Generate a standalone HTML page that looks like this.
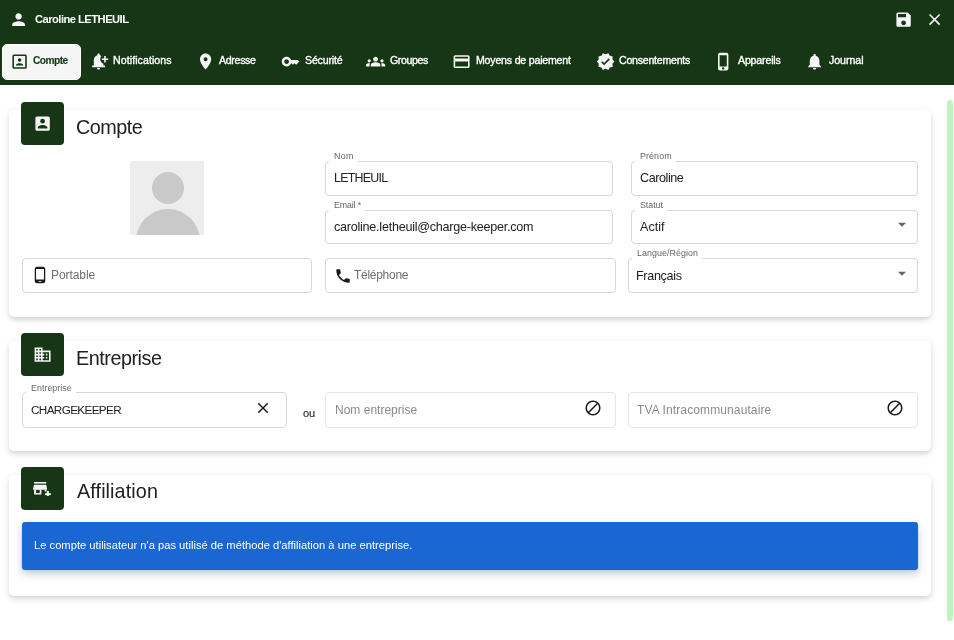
<!DOCTYPE html>
<html><head><meta charset="utf-8">
<style>
*{box-sizing:border-box;margin:0;padding:0}
html,body{width:954px;height:640px;overflow:hidden;background:#fff;font-family:"Liberation Sans",sans-serif;color:#212121}
.ico{position:absolute;display:block;overflow:visible}
.t{position:absolute;white-space:pre;line-height:1;will-change:transform}
.blk{position:absolute}
.card{position:absolute;left:9px;width:922px;background:#fff;border-radius:5px;box-shadow:0 3px 5px -1px rgba(0,0,0,.13),0 2px 9px 1px rgba(0,0,0,.07)}
.sq{position:absolute;left:21px;width:43px;height:43px;background:#163616;border-radius:4px}
.fld{position:absolute;border:1px solid #d6d6d6;border-radius:4px;background:#fff}
.fld.dis{border-color:#e6e6e6}
.gap{position:absolute;height:3px;background:#fff}
</style></head><body>
<div class="blk" style="left:0;top:0;width:954px;height:85px;background:#163616"></div>
<svg class="ico" style="left:8.80px;top:9.80px" width="19.2" height="19.2" viewBox="0 0 24 24"><path fill="#f7f7f7" d="M12 12c2.21 0 4-1.79 4-4s-1.79-4-4-4-4 1.79-4 4 1.79 4 4 4zm0 2c-2.67 0-8 1.34-8 4v2h16v-2c0-2.66-5.33-4-8-4z"/></svg>
<div class="t" style="left:34.8px;top:14px;font-size:11.2px;letter-spacing:-0.533px;font-weight:bold;color:#fff;">Caroline LETHEUIL</div>
<svg class="ico" style="left:893.50px;top:9.60px" width="19.2" height="19.2" viewBox="0 0 24 24"><path fill="#f7f7f7" d="M17 3H5c-1.11 0-2 .9-2 2v14c0 1.1.89 2 2 2h14c1.1 0 2-.9 2-2V7l-4-4zm-5 16c-1.66 0-3-1.34-3-3s1.34-3 3-3 3 1.34 3 3-1.34 3-3 3zm3-10H5V5h10v4z"/></svg>
<svg class="ico" style="left:925.00px;top:9.70px" width="19.2" height="19.2" viewBox="0 0 24 24"><path fill="#f7f7f7" d="M19 6.41L17.59 5 12 10.59 6.41 5 5 6.41 10.59 12 5 17.59 6.41 19 12 13.41 17.59 19 19 17.59 13.41 12z"/></svg>
<div class="blk" style="left:2px;top:44px;width:79px;height:36px;background:#f5f5f5;border:1px solid #fff;border-radius:5px"></div>
<svg class="ico" style="left:9.60px;top:51.70px" width="19.2" height="19.2" viewBox="0 0 24 24"><path fill="#163616" d="M19,19H5V5H19M19,3H5A2,2 0 0,0 3,5V19A2,2 0 0,0 5,21H19A2,2 0 0,0 21,19V5C21,3.89 20.1,3 19,3M16.5,16.25C16.5,14.75 13.5,14 12,14C10.5,14 7.5,14.75 7.5,16.25V17H16.5M12,12.25A2.25,2.25 0 0,0 14.25,10A2.25,2.25 0 0,0 12,7.75A2.25,2.25 0 0,0 9.75,10A2.25,2.25 0 0,0 12,12.25Z"/></svg>
<div class="t" style="left:33.2px;top:56px;font-size:10.2px;letter-spacing:-0.551px;font-weight:bold;color:#163616;-webkit-text-stroke:0.15px #163616">Compte</div>
<svg class="ico" style="left:89.40px;top:51.70px" width="19.2" height="19.2" viewBox="0 0 24 24"><path fill="#f7f7f7" d="M10 20h4c0 1.1-.9 2-2 2s-2-.9-2-2zm4-11c0 2.61 1.67 4.83 4 5.65V17h2v2H4v-2h2v-7c0-2.79 1.91-5.14 4.5-5.8v-.7c0-.83.67-1.5 1.5-1.5s1.5.67 1.5 1.5v.7c.71.18 1.36.49 1.94.9A6.005 6.005 0 0014 9zm10-1h-3V5h-2v3h-3v2h3v3h2v-3h3V8z"/></svg>
<div class="t" style="left:112.9px;top:55px;font-size:10.6px;letter-spacing:0.075px;color:#fff;-webkit-text-stroke:0.35px #fff">Notifications</div>
<svg class="ico" style="left:196.30px;top:51.70px" width="19.2" height="19.2" viewBox="0 0 24 24"><path fill="#f7f7f7" d="M12 2C8.13 2 5 5.13 5 9c0 5.25 7 13 7 13s7-7.75 7-13c0-3.87-3.13-7-7-7zm0 9.5c-1.38 0-2.5-1.12-2.5-2.5s1.12-2.5 2.5-2.5 2.5 1.12 2.5 2.5-1.12 2.5-2.5 2.5z"/></svg>
<div class="t" style="left:219.4px;top:55px;font-size:10.6px;letter-spacing:-0.312px;color:#fff;-webkit-text-stroke:0.35px #fff">Adresse</div>
<svg class="ico" style="left:281.00px;top:51.70px" width="19.2" height="19.2" viewBox="0 0 24 24"><path fill="#f7f7f7" d="M21 10h-8.35C11.83 7.67 9.61 6 7 6c-3.31 0-6 2.69-6 6s2.69 6 6 6c2.61 0 4.83-1.67 5.65-4H13l2 2 2-2 2 2 4-4.04L21 10zM7 15c-1.65 0-3-1.35-3-3s1.35-3 3-3 3 1.35 3 3-1.35 3-3 3z"/></svg>
<div class="t" style="left:304.6px;top:55px;font-size:10.6px;letter-spacing:-0.182px;color:#fff;-webkit-text-stroke:0.35px #fff">Sécurité</div>
<svg class="ico" style="left:366.40px;top:51.70px" width="19.2" height="19.2" viewBox="0 0 24 24"><path fill="#f7f7f7" d="M12 12.75c1.63 0 3.07.39 4.24.9 1.08.48 1.76 1.56 1.76 2.73V18H6v-1.61c0-1.18.68-2.26 1.760-2.73 1.17-.52 2.61-.91 4.24-.91zM4 13c1.1 0 2-.9 2-2s-.9-2-2-2-2 .9-2 2 .9 2 2 2zm1.13 1.1c-.37-.06-.74-.1-1.13-.1-.99 0-1.93.21-2.78.58C.48 14.9 0 15.62 0 16.43V18h4.5v-1.61c0-.83.23-1.61.63-2.29zM20 13c1.1 0 2-.9 2-2s-.9-2-2-2-2 .9-2 2 .9 2 2 2zm4 3.43c0-.81-.48-1.530-1.22-1.85-.85-.37-1.79-.58-2.78-.58-.39 0-.76.04-1.13.1.4.68.63 1.46.63 2.29V18H24v-1.57zM12 6c1.66 0 3 1.34 3 3s-1.34 3-3 3-3-1.34-3-3 1.34-3 3-3z"/></svg>
<div class="t" style="left:390.0px;top:55px;font-size:10.6px;letter-spacing:-0.406px;color:#fff;-webkit-text-stroke:0.35px #fff">Groupes</div>
<svg class="ico" style="left:452.00px;top:51.70px" width="19.2" height="19.2" viewBox="0 0 24 24"><path fill="#f7f7f7" d="M20 4H4c-1.11 0-1.99.89-1.99 2L2 18c0 1.11.89 2 2 2h16c1.11 0 2-.89 2-2V6c0-1.11-.89-2-2-2zm0 14H4v-6h16v6zm0-10H4V6h16v2z"/></svg>
<div class="t" style="left:476.0px;top:55px;font-size:10.6px;letter-spacing:-0.2px;color:#fff;-webkit-text-stroke:0.35px #fff">Moyens de paiement</div>
<svg class="ico" style="left:595.50px;top:51.70px" width="19.2" height="19.2" viewBox="0 0 24 24"><path fill="#f7f7f7" d="M23 12l-2.44-2.79.34-3.69-3.61-.82-1.89-3.2L12 2.96 8.6 1.5 6.71 4.69 3.1 5.5l.34 3.7L1 12l2.44 2.79-.34 3.7 3.61.82L8.6 22.5l3.4-1.47 3.4 1.46 1.89-3.19 3.61-.82-.34-3.69L23 12zm-12.91 4.72l-3.8-3.81 1.48-1.48 2.32 2.33 5.85-5.87 1.48 1.48-7.33 7.35z"/></svg>
<div class="t" style="left:618.6px;top:55px;font-size:10.6px;letter-spacing:-0.242px;color:#fff;-webkit-text-stroke:0.35px #fff">Consentements</div>
<svg class="ico" style="left:714.10px;top:51.70px" width="19.2" height="19.2" viewBox="0 0 24 24"><path fill="#f7f7f7" d="M15.5 1h-8C6.12 1 5 2.12 5 3.5v17C5 21.88 6.12 23 7.5 23h8c1.38 0 2.5-1.12 2.5-2.5v-17C18 2.12 16.88 1 15.5 1zm-4 21c-.83 0-1.5-.67-1.5-1.5s.67-1.5 1.5-1.5 1.5.67 1.5 1.5-.67 1.5-1.5 1.5zm4.5-4H7V4h9v14z"/></svg>
<div class="t" style="left:737.6px;top:55px;font-size:10.6px;letter-spacing:-0.171px;color:#fff;-webkit-text-stroke:0.35px #fff">Appareils</div>
<svg class="ico" style="left:804.80px;top:51.70px" width="19.2" height="19.2" viewBox="0 0 24 24"><path fill="#f7f7f7" d="M12 22c1.1 0 2-.9 2-2h-4c0 1.1.89 2 2 2zm6-6v-5c0-3.07-1.64-5.64-4.5-6.32V4c0-.83-.67-1.5-1.5-1.5s-1.5.67-1.5 1.5v.68C7.63 5.36 6 7.92 6 11v5l-2 2v1h16v-1l-2-2z"/></svg>
<div class="t" style="left:828.7px;top:55px;font-size:10.6px;letter-spacing:-0.032px;color:#fff;-webkit-text-stroke:0.35px #fff">Journal</div>
<div class="blk" style="left:947px;top:100px;width:6px;height:521px;background:#bff3bf;border-radius:3px"></div>
<div class="card" style="top:110px;height:207px"></div>
<div class="sq" style="top:102px"></div>
<svg class="ico" style="left:32.60px;top:113.60px" width="19.2" height="19.2" viewBox="0 0 24 24"><path fill="#f5f5f5" d="M6,17C6,15 10,13.9 12,13.9C14,13.9 18,15 18,17V18H6M15,9A3,3 0 0,1 12,12A3,3 0 0,1 9,9A3,3 0 0,1 12,6A3,3 0 0,1 15,9M3,5V19A2,2 0 0,0 5,21H19A2,2 0 0,0 21,19V5A2,2 0 0,0 19,3H5C3.89,3 3,3.9 3,5Z"/></svg>
<div class="t" style="left:75.9px;top:118px;font-size:19.8px;letter-spacing:-0.512px;">Compte</div>
<div class="blk" style="left:130px;top:161px;width:74px;height:74px;background:#ededed;border-radius:2px;overflow:hidden"><div class="blk" style="left:21.9px;top:11.3px;width:32px;height:32px;border-radius:50%;background:#c9c9c9"></div><div class="blk" style="left:6px;top:48.4px;width:64px;height:64px;border-radius:50%;background:#c9c9c9"></div></div>
<div class="fld" style="left:325px;top:161px;width:288px;height:35px"></div>
<div class="t" style="left:329.30px;top:152.00px;font-size:8.9px;letter-spacing:0.277px;color:#666;background:#fff;padding:0 4px 2px 5px;line-height:1.05">Nom</div>
<div class="t" style="left:333.8px;top:172px;font-size:12.4px;letter-spacing:-0.732px;">LETHEUIL</div>
<div class="fld" style="left:631px;top:161px;width:287px;height:35px"></div>
<div class="t" style="left:635.20px;top:152.00px;font-size:8.9px;letter-spacing:0.103px;color:#666;background:#fff;padding:0 4px 2px 5px;line-height:1.05">Prénom</div>
<div class="t" style="left:640.2px;top:172px;font-size:12.6px;letter-spacing:-0.442px;">Caroline</div>
<div class="fld" style="left:325px;top:210px;width:288px;height:34px"></div>
<div class="t" style="left:329.20px;top:201.00px;font-size:8.9px;letter-spacing:-0.16px;color:#666;background:#fff;padding:0 4px 2px 5px;line-height:1.05">Email *</div>
<div class="t" style="left:334.2px;top:221px;font-size:12.6px;letter-spacing:-0.25px;">caroline.letheuil@charge-keeper.com</div>
<div class="fld" style="left:631px;top:210px;width:287px;height:34px"></div>
<div class="t" style="left:635.20px;top:201.00px;font-size:8.9px;letter-spacing:-0.065px;color:#666;background:#fff;padding:0 4px 2px 5px;line-height:1.05">Statut</div>
<div class="t" style="left:640.2px;top:221px;font-size:12.6px;letter-spacing:0.027px;">Actif</div>
<svg class="ico" style="left:896px;top:222px" width="12" height="6" viewBox="0 0 12 6"><path fill="#666" d="M2 0.8h8L6 4.8z"/></svg>
<div class="fld" style="left:22px;top:258px;width:290px;height:35px"></div>
<svg class="ico" style="left:30.50px;top:266.40px" width="18" height="18" viewBox="0 0 24 24"><path fill="#1a1a1a" d="M16 1H8C6.34 1 5 2.34 5 4v16c0 1.66 1.34 3 3 3h8c1.66 0 3-1.34 3-3V4c0-1.66-1.34-3-3-3zm-2 20h-4v-1h4v1zm3.25-3H6.75V4h10.5v14z"/></svg>
<div class="t" style="left:50.7px;top:269px;font-size:12.0px;letter-spacing:-0.074px;color:#6f6f6f;">Portable</div>
<div class="fld" style="left:325px;top:258px;width:291px;height:35px"></div>
<svg class="ico" style="left:333.90px;top:266.75px" width="18" height="18" viewBox="0 0 24 24"><path fill="#1a1a1a" d="M6.62 10.79c1.44 2.83 3.76 5.14 6.59 6.59l2.2-2.2c.27-.27.67-.36 1.02-.24 1.12.37 2.33.57 3.57.57.55 0 1 .45 1 1V20c0 .55-.45 1-1 1-9.39 0-17-7.61-17-17 0-.55.45-1 1-1h3.5c.55 0 1 .45 1 1 0 1.25.2 2.45.57 3.57.11.35.03.74-.25 1.02l-2.2 2.2z"/></svg>
<div class="t" style="left:354.2px;top:269px;font-size:12.0px;letter-spacing:-0.28px;color:#6f6f6f;">Téléphone</div>
<div class="fld" style="left:628px;top:258px;width:290px;height:35px"></div>
<div class="t" style="left:632.20px;top:249.00px;font-size:8.9px;letter-spacing:0.069px;color:#666;background:#fff;padding:0 4px 2px 5px;line-height:1.05">Langue/Région</div>
<div class="t" style="left:636.2px;top:270px;font-size:12.6px;letter-spacing:-0.328px;">Français</div>
<svg class="ico" style="left:896px;top:271px" width="12" height="6" viewBox="0 0 12 6"><path fill="#666" d="M2 0.8h8L6 4.8z"/></svg>
<div class="card" style="top:341px;height:110px"></div>
<div class="sq" style="top:333px"></div>
<svg class="ico" style="left:32.60px;top:344.90px" width="19.2" height="19.2" viewBox="0 0 24 24"><path fill="#f5f5f5" d="M12 7V3H2v18h20V7H12zM6 19H4v-2h2v2zm0-4H4v-2h2v2zm0-4H4V9h2v2zm0-4H4V5h2v2zm4 12H8v-2h2v2zm0-4H8v-2h2v2zm0-4H8V9h2v2zm0-4H8V5h2v2zm10 12h-8v-2h2v-2h-2v-2h2v-2h-2V9h8v10zm-2-8h-2v2h2v-2zm0 4h-2v2h2v-2z"/></svg>
<div class="t" style="left:76.1px;top:349px;font-size:19.8px;letter-spacing:-0.473px;">Entreprise</div>
<div class="fld" style="left:22px;top:392px;width:265px;height:36px"></div>
<div class="t" style="left:26.10px;top:384.00px;font-size:8.9px;letter-spacing:0.032px;color:#666;background:#fff;padding:0 4px 2px 5px;line-height:1.05">Entreprise</div>
<div class="t" style="left:31.1px;top:404px;font-size:11.7px;letter-spacing:-0.616px;">CHARGEKEEPER</div>
<svg class="ico" style="left:254.35px;top:399.25px" width="18" height="18" viewBox="0 0 24 24"><path fill="#1a1a1a" d="M19 6.41L17.59 5 12 10.59 6.41 5 5 6.41 10.59 12 5 17.59 6.41 19 12 13.41 17.59 19 19 17.59 13.41 12z"/></svg>
<div class="t" style="left:302.9px;top:408px;font-size:11.0px;letter-spacing:-0.018px;color:#222;-webkit-text-stroke:0.1px #222">ou</div>
<div class="fld dis" style="left:325px;top:392px;width:291px;height:36px"></div>
<div class="t" style="left:334.7px;top:404px;font-size:12.0px;letter-spacing:0.011px;color:#8a8a8a;">Nom entreprise</div>
<svg class="ico" style="left:583.70px;top:398.70px" width="18" height="18" viewBox="0 0 24 24"><path fill="#1a1a1a" d="M12 2C6.48 2 2 6.48 2 12s4.48 10 10 10 10-4.48 10-10S17.52 2 12 2zM4 12c0-4.42 3.58-8 8-8 1.85 0 3.55.63 4.9 1.69L5.69 16.9C4.63 15.55 4 13.85 4 12zm8 8c-1.85 0-3.55-.63-4.9-1.69L18.31 7.1C19.37 8.45 20 10.15 20 12c0 4.42-3.58 8-8 8z"/></svg>
<div class="fld dis" style="left:628px;top:392px;width:290px;height:36px"></div>
<div class="t" style="left:636.8px;top:404px;font-size:12.0px;letter-spacing:0.113px;color:#8a8a8a;">TVA Intracommunautaire</div>
<svg class="ico" style="left:886.30px;top:398.70px" width="18" height="18" viewBox="0 0 24 24"><path fill="#1a1a1a" d="M12 2C6.48 2 2 6.48 2 12s4.48 10 10 10 10-4.48 10-10S17.52 2 12 2zM4 12c0-4.42 3.58-8 8-8 1.85 0 3.55.63 4.9 1.69L5.69 16.9C4.63 15.55 4 13.85 4 12zm8 8c-1.85 0-3.55-.63-4.9-1.69L18.31 7.1C19.37 8.45 20 10.15 20 12c0 4.42-3.58 8-8 8z"/></svg>
<div class="card" style="top:475px;height:121px"></div>
<div class="sq" style="top:467px"></div>
<svg class="ico" style="left:0;top:0" width="954" height="640" viewBox="0 0 954 640"><g fill="#f5f5f5"><rect x="34.06" y="482" width="12.2" height="1.55"/><path d="M34.06 484.7H46.25L47 488.8V489.7H33.1V488.8Z"/><path fill-rule="evenodd" d="M34.1 489.6H41.4V494.6H34.1Z M36.1 490.1V492.9H39.7V490.1Z"/><rect x="44.7" y="489.6" width="1.9" height="1.9"/><rect x="45" y="493.2" width="5.9" height="1.9"/><rect x="46.9" y="491" width="2" height="5"/></g></svg>
<div class="t" style="left:76.6px;top:482px;font-size:19.8px;letter-spacing:0.099px;">Affiliation</div>
<div class="blk" style="left:22px;top:522px;width:896px;height:48px;background:#1a67d4;border-radius:3px;box-shadow:0 4px 9px rgba(30,60,130,.26),0 1px 3px rgba(0,0,0,.08)"></div>
<div class="t" style="left:33.6px;top:540px;font-size:11.2px;letter-spacing:-0.002px;color:#fff;">Le compte utilisateur n'a pas utilisé de méthode d'affiliation à une entreprise.</div>
</body></html>
